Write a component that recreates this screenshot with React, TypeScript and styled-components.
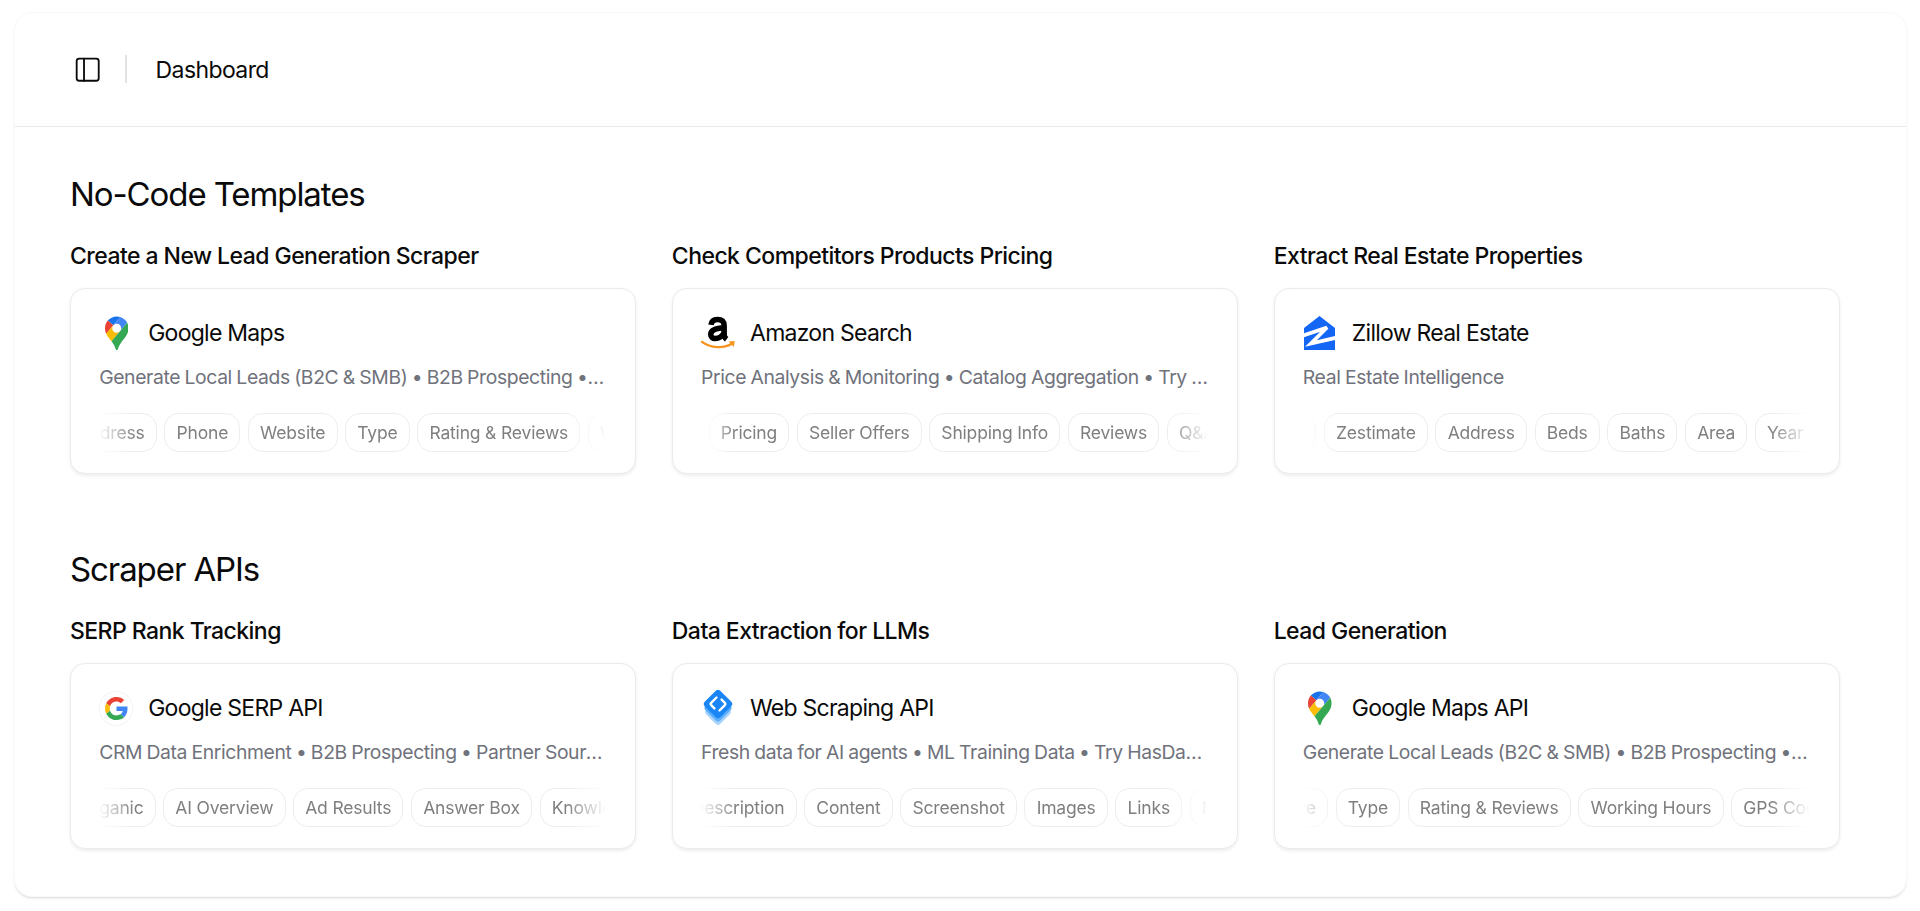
import React from 'react';
import styled, { createGlobalStyle } from 'styled-components';
import { PanelLeft } from 'lucide-react';

const Global = createGlobalStyle`
  html, body { margin: 0; padding: 0; background: #fff; }
  body { font-family: Inter, "Noto Sans", sans-serif; color: #0a0a0a; overflow: hidden; }
  * { box-sizing: border-box; }
`;

const Page = styled.div`
  width: 1920px;
  height: 911px;
  padding: 12px 13px 14px 14px;
`;

const Panel = styled.div`
  height: 885px;
  background: #fff;
  border-radius: 18px;
  border: 1px solid #f9f9fa;
  box-shadow: 0 2px 3px -1px rgba(0, 0, 0, 0.16);
  overflow: hidden;
`;

const TopBar = styled.header`
  height: 113.8px;
  display: flex;
  align-items: center;
  padding-left: 58px;
  border-bottom: 1.2px solid #e9e9eb;
`;

const IconSlot = styled.span`
  display: flex;
  width: 29.4px;
  height: 29.4px;
  color: #0a0a0a;
`;

const Divider = styled.span`
  width: 1.2px;
  height: 28px;
  background: #e4e4e7;
  margin: 0 29px 0 23px;
`;

const Crumb = styled.span`
  font-size: 23px;
  line-height: 30px;
  letter-spacing: -0.026em;
  margin-top: 1.5px;
`;

const Main = styled.main`
  padding: 48.8px 66px 0 55px;
`;

const Section = styled.section`
  margin-bottom: 76.7px;
`;

const Heading = styled.h2`
  margin: 0 0 30.6px;
  font-size: 33px;
  line-height: 36px;
  font-weight: 400;
  letter-spacing: -0.033em;
`;

const Grid = styled.div`
  display: grid;
  grid-template-columns: repeat(3, 1fr);
  column-gap: 35.5px;
`;

const Column = styled.div`
  min-width: 0;
`;

const SubHeading = styled.h3`
  margin: 0 0 17.4px;
  font-size: 23px;
  line-height: 28px;
  font-weight: 500;
  letter-spacing: -0.024em;
`;

const Card = styled.article`
  height: 186.5px;
  padding: 27.4px 29px 21px 28.2px;
  background: #fff;
  border: 1.2px solid #ebebed;
  border-radius: 15px;
  box-shadow: 0 1.5px 3.5px rgba(0, 0, 0, 0.07);
`;

const CardHead = styled.div`
  display: flex;
  align-items: center;
  gap: 14.7px;
  height: 34.5px;
`;

const Logo = styled.span<{ $ring?: boolean }>`
  width: 34.3px;
  height: 34.5px;
  flex: none;
  display: flex;
  align-items: center;
  justify-content: center;
  border-radius: 50%;
  border: ${(p) => (p.$ring ? '1px solid #f4f4f5' : 'none')};
`;

const CardTitle = styled.span`
  font-size: 23px;
  line-height: 28px;
  letter-spacing: -0.032em;
`;

const Description = styled.p`
  margin: 14.6px 0 0;
  font-size: 19.35px;
  line-height: 24px;
  color: #70727c;
  letter-spacing: -0.02em;
  word-spacing: -0.6px;
  white-space: nowrap;
  overflow: hidden;
  text-overflow: ellipsis;
`;

const ChipViewport = styled.div`
  margin-top: 24.2px;
  height: 38.5px;
  overflow: hidden;
  -webkit-mask-image: linear-gradient(to right, transparent, #000 7%, #000 92%, transparent);
  mask-image: linear-gradient(to right, transparent, #000 7%, #000 92%, transparent);
`;

const ChipTrack = styled.div<{ $offset: number }>`
  display: flex;
  gap: 7.5px;
  width: max-content;
  margin-left: ${(p) => p.$offset}px;
`;

const Chip = styled.span`
  height: 38.5px;
  padding: 0 11.2px;
  display: flex;
  align-items: center;
  font-size: 17.5px;
  color: #7f7f82;
  letter-spacing: -0.01em;
  border: 1.2px solid #ececee;
  border-radius: 14.7px;
  white-space: nowrap;
`;

const MapsLogo = () => (
  <svg width="23.5" height="34.5" viewBox="0 0 92.3 132.3">
    <path fill="#1a73e8" d="M60.2 2.2C55.8.8 51 0 46.1 0 32 0 19.3 6.4 10.8 16.5l21.8 18.3L60.2 2.2z" />
    <path fill="#ea4335" d="M10.8 16.5C4.1 24.5 0 34.9 0 46.1c0 8.7 1.7 15.7 4.6 22l28-33.3-21.8-18.3z" />
    <path fill="#4285f4" d="M46.2 28.5c9.8 0 17.7 7.9 17.7 17.7 0 4.3-1.6 8.3-4.2 11.4 0 0 13.9-16.6 27.5-32.7-5.6-10.8-15.3-19-27-22.7L32.6 34.8c3.3-3.8 8.1-6.3 13.6-6.3" />
    <path fill="#fbbc04" d="M46.2 63.8c-9.8 0-17.7-7.9-17.7-17.7 0-4.3 1.5-8.3 4.1-11.3l-28 33.3c4.8 10.6 12.8 19.2 21 29.9l34.1-40.5c-3.3 3.9-8.1 6.3-13.5 6.3" />
    <path fill="#34a853" d="M59.1 109.2c15.4-24.1 33.3-35 33.3-63 0-7.7-1.9-14.9-5.2-21.3L25.6 98c2.6 3.4 5.3 7.3 7.9 11.3 9.4 14.5 6.8 23.1 12.8 23.1s3.4-8.7 12.8-23.2" />
  </svg>
);

const GoogleLogo = () => (
  <svg width="23" height="23" viewBox="0 0 48 48">
    <path fill="#EA4335" d="M24 9.5c3.54 0 6.71 1.22 9.21 3.6l6.85-6.85C35.9 2.38 30.47 0 24 0 14.62 0 6.51 5.38 2.56 13.22l7.98 6.19C12.43 13.72 17.74 9.5 24 9.5z" />
    <path fill="#4285F4" d="M46.98 24.55c0-1.57-.15-3.09-.38-4.55H24v9.02h12.94c-.58 2.96-2.26 5.48-4.78 7.18l7.73 6c4.51-4.18 7.09-10.36 7.09-17.65z" />
    <path fill="#FBBC05" d="M10.53 28.59c-.48-1.45-.76-2.99-.76-4.59s.27-3.14.76-4.59l-7.98-6.19C.92 16.46 0 20.12 0 24c0 3.88.92 7.54 2.56 10.78l7.97-6.19z" />
    <path fill="#34A853" d="M24 48c6.48 0 11.93-2.13 15.89-5.81l-7.73-6c-2.15 1.45-4.92 2.3-8.16 2.3-6.26 0-11.57-4.22-13.47-9.91l-7.98 6.19C6.51 42.62 14.62 48 24 48z" />
  </svg>
);

const AmazonLogo = () => (
  <svg width="36" height="34" viewBox="0 0 36 34">
    <g fill="none" stroke="#000" strokeWidth="5.8">
      <path d="M10.5 8.5C11 4.5 13.5 2.8 17.2 2.8c4.6 0 7.1 2.2 7.1 6.4v10c0 2 .9 3 2.6 4.3" />
      <path d="M24.3 11.5C16 12.2 10.2 13.4 10.2 18.2c0 3 1.9 4.6 4.8 4.6 4 0 7.4-2.4 9.3-6" />
    </g>
    <path d="M1 26.3c9 6.6 23 7.5 31.6 1.8" fill="none" stroke="#f7931e" strokeWidth="2.5" strokeLinecap="round" />
    <path d="M29 25.9l6.4-.5-.9 6.2z" fill="#f7931e" />
  </svg>
);

const ZillowLogo = () => (
  <svg width="31" height="34.5" viewBox="0 0 31 34.5">
    <path fill="#1467f5" d="M15.5 0 31 12v22.5H0V12z" />
    <path fill="none" stroke="#fff" strokeWidth="3.8" strokeLinejoin="miter" d="M-2 20 23 11.5 7 27.5 33 21.5" />
  </svg>
);

const WebLogo = () => (
  <svg width="30" height="36" viewBox="0 0 30 36">
    <rect x="5" y="12" width="20" height="20" rx="3.5" transform="rotate(45 15 22)" fill="#a9d4fc" />
    <rect x="4.5" y="7.5" width="21" height="21" rx="3.5" transform="rotate(45 15 18)" fill="#5aaefb" />
    <rect x="4" y="3" width="22" height="22" rx="3.5" transform="rotate(45 15 14)" fill="#1a86f5" />
    <g fill="none" stroke="#fff" strokeWidth="2.4" strokeLinecap="round" strokeLinejoin="round">
      <path d="M13.5 7.5 8.4 12.6c-.8.8-.8 2 0 2.8l3 3" />
      <path d="M16.5 20.5 21.6 15.4c.8-.8.8-2 0-2.8l-3-3" />
    </g>
  </svg>
);

type CardData = {
  heading: string;
  logo: React.ReactNode;
  ring?: boolean;
  title: string;
  text: string;
  offset: number;
  chips: string[];
};

const templates: CardData[] = [
  {
    heading: 'Create a New Lead Generation Scraper',
    logo: <MapsLogo />,
    title: 'Google Maps',
    text: 'Generate Local Leads (B2C & SMB) • B2B Prospecting • Try HasData',
    offset: -34,
    chips: ['Address', 'Phone', 'Website', 'Type', 'Rating & Reviews', 'Working Hours'],
  },
  {
    heading: 'Check Competitors Products Pricing',
    logo: <AmazonLogo />,
    title: 'Amazon Search',
    text: 'Price Analysis & Monitoring • Catalog Aggregation • Try HasData',
    offset: 7.5,
    chips: ['Pricing', 'Seller Offers', 'Shipping Info', 'Reviews', 'Q&A'],
  },
  {
    heading: 'Extract Real Estate Properties',
    logo: <ZillowLogo />,
    title: 'Zillow Real Estate',
    text: 'Real Estate Intelligence',
    offset: -52.5,
    chips: ['Price', 'Zestimate', 'Address', 'Beds', 'Baths', 'Area', 'Year Built'],
  },
];

const apis: CardData[] = [
  {
    heading: 'SERP Rank Tracking',
    logo: <GoogleLogo />,
    ring: true,
    title: 'Google SERP API',
    text: 'CRM Data Enrichment • B2B Prospecting • Partner Sourcing • Try HasData',
    offset: -31.5,
    chips: ['Organic', 'AI Overview', 'Ad Results', 'Answer Box', 'Knowledge Graph'],
  },
  {
    heading: 'Data Extraction for LLMs',
    logo: <WebLogo />,
    title: 'Web Scraping API',
    text: 'Fresh data for AI agents • ML Training Data • Try HasData Scraper',
    offset: -21.5,
    chips: ['Description', 'Content', 'Screenshot', 'Images', 'Links', 'Metadata'],
  },
  {
    heading: 'Lead Generation',
    logo: <MapsLogo />,
    title: 'Google Maps API',
    text: 'Generate Local Leads (B2C & SMB) • B2B Prospecting • Try HasData',
    offset: -64.5,
    chips: ['Website', 'Type', 'Rating & Reviews', 'Working Hours', 'GPS Coordinates'],
  },
];

const CardColumn = ({ data }: { data: CardData }) => (
  <Column>
    <SubHeading>{data.heading}</SubHeading>
    <Card>
      <CardHead>
        <Logo $ring={data.ring}>{data.logo}</Logo>
        <CardTitle>{data.title}</CardTitle>
      </CardHead>
      <Description>{data.text}</Description>
      <ChipViewport>
        <ChipTrack $offset={data.offset}>
          {data.chips.map((c) => (
            <Chip key={c}>{c}</Chip>
          ))}
        </ChipTrack>
      </ChipViewport>
    </Card>
  </Column>
);

export default function App() {
  return (
    <Page>
      <Global />
      <Panel>
        <TopBar>
          <IconSlot>
            <PanelLeft size={29.4} strokeWidth={1.5} />
          </IconSlot>
          <Divider />
          <Crumb>Dashboard</Crumb>
        </TopBar>
        <Main>
          <Section>
            <Heading>No-Code Templates</Heading>
            <Grid>
              {templates.map((d) => (
                <CardColumn key={d.title} data={d} />
              ))}
            </Grid>
          </Section>
          <Section>
            <Heading>Scraper APIs</Heading>
            <Grid>
              {apis.map((d) => (
                <CardColumn key={d.title} data={d} />
              ))}
            </Grid>
          </Section>
        </Main>
      </Panel>
    </Page>
  );
}
